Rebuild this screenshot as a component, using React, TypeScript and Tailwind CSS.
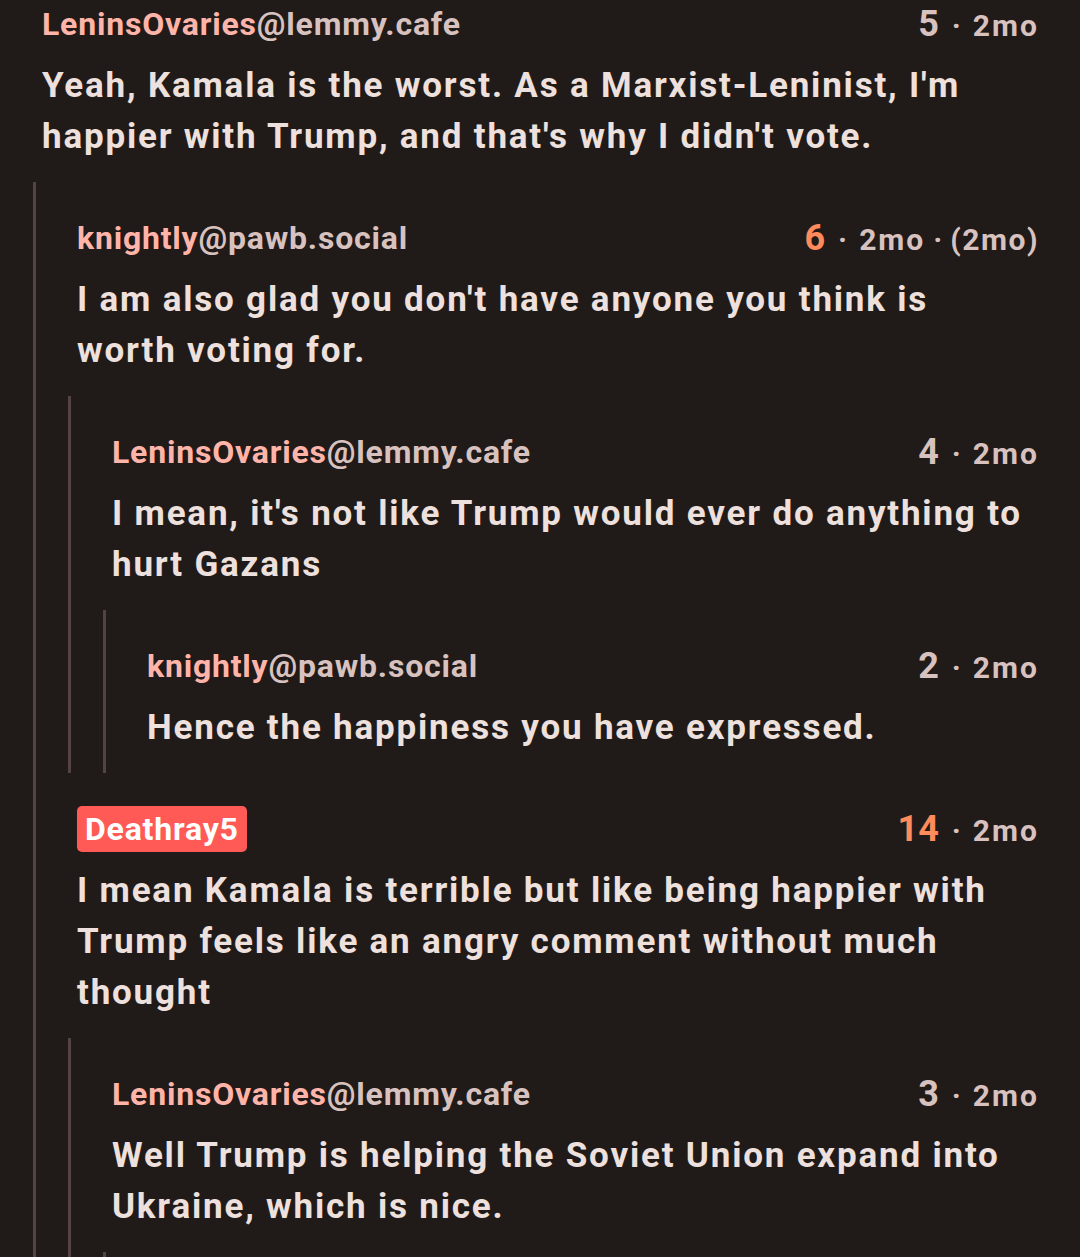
type Comment = {
  user: string;
  instance?: string;
  op?: boolean;
  score: number;
  upvoted?: boolean;
  time: string;
  edited?: string;
  body: string;
  children?: Comment[];
};

const thread: Comment = {
  user: "LeninsOvaries",
  instance: "lemmy.cafe",
  score: 5,
  time: "2mo",
  body: "Yeah, Kamala is the worst. As a Marxist-Leninist, I'm happier with Trump, and that's why I didn't vote.",
  children: [
    {
      user: "knightly",
      instance: "pawb.social",
      score: 6,
      upvoted: true,
      time: "2mo",
      edited: "(2mo)",
      body: "I am also glad you don't have anyone you think is worth voting for.",
      children: [
        {
          user: "LeninsOvaries",
          instance: "lemmy.cafe",
          score: 4,
          time: "2mo",
          body: "I mean, it's not like Trump would ever do anything to hurt Gazans",
          children: [
            {
              user: "knightly",
              instance: "pawb.social",
              score: 2,
              time: "2mo",
              body: "Hence the happiness you have expressed.",
            },
          ],
        },
      ],
    },
    {
      user: "Deathray5",
      op: true,
      score: 14,
      upvoted: true,
      time: "2mo",
      body: "I mean Kamala is terrible but like being happier with Trump feels like an angry comment without much thought",
      children: [
        {
          user: "LeninsOvaries",
          instance: "lemmy.cafe",
          score: 3,
          time: "2mo",
          body: "Well Trump is helping the Soviet Union expand into Ukraine, which is nice.",
          // next reply starts just below the fold
          children: [],
        },
      ],
    },
  ],
};

function CommentNode({ c, root }: { c: Comment; root?: boolean }) {
  return (
    <div className={root ? "" : "pt-8"}>
      <div className="pb-5 pl-[9px]">
        {/* header */}
        <div className="h-12 flex items-center justify-between">
          {c.op ? (
            <span className="bg-[#ff5a55] text-white rounded-[5px] px-[8px] text-[32px] leading-[46px] tracking-[0.8px] font-bold">
              {c.user}
            </span>
          ) : (
            <span className="text-[32px] tracking-[0.8px] font-bold">
              <span className="text-[#ffb4a9]">{c.user}</span>
              <span className="text-[#d8c2bf]">@{c.instance}</span>
            </span>
          )}
          <span className="flex items-baseline text-[#d8c2bf] font-bold -mr-[2px]">
            <span className={`text-[36px] ${c.upvoted ? "text-[#ff8a5b]" : ""}`}>{c.score}</span>
            <span className="text-[30px] ml-[13px] mr-[12px]">·</span>
            <span className="text-[30px] tracking-[2px]">{c.time}</span>
            {c.edited && (
              <>
                <span className="text-[30px] mx-[8px]">·</span>
                <span className="text-[30px] tracking-[1.5px]">{c.edited}</span>
              </>
            )}
          </span>
        </div>
        {/* body */}
        <p className="mt-3 pr-[12px] text-[35px] leading-[51px] tracking-[1.8px] font-bold text-[#ede0dd]">
          {c.body}
        </p>
      </div>
      {c.children && (
        <div
          className={`border-l-[3px] border-[#534341] pl-[32px] ${
            c.children.length === 0 ? "min-h-[60px]" : ""
          }`}
        >
          {c.children.map((ch, i) => (
            <CommentNode key={i} c={ch} />
          ))}
        </div>
      )}
    </div>
  );
}

export default function App() {
  return (
    <div
      className="h-[1257px] overflow-hidden bg-[#201a19] pl-[33px] pr-[43px]"
      style={{ fontFamily: "Roboto, 'Noto Sans', sans-serif" }}
    >
      <CommentNode c={thread} root />
    </div>
  );
}
